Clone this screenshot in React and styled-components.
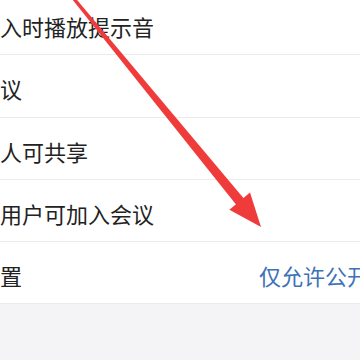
import styled, { createGlobalStyle } from 'styled-components'

const Global = createGlobalStyle`
    html, body {margin: 0; padding: 0;}
    body {
        background-color: #f4f4f6;
        font-family: "Noto Sans CJK SC", "Noto Sans", sans-serif;
    }
`

const Screen = styled.main`
    position: relative;
    width: 360px;
    height: 360px;
    overflow: hidden;
    background-color: #f4f4f6;
`

const List = styled.ul`
    list-style: none;
    margin: -7px 0 0 -66px;
    padding: 0;
    width: 500px;
    background-color: #fff;
`

const Row = styled.li`
    box-sizing: border-box;
    height: 62.25px;
    padding: 5px 21px 0 0;
    display: flex;
    align-items: center;
    justify-content: space-between;
    border-bottom: 1px solid #ebebeb;
    font-size: 22px;
    line-height: 1;
    white-space: nowrap;
`

const Label = styled.span`
    color: #222;
`

const Value = styled.span`
    color: #3d72b8;
`

const Arrow = styled.svg`
    position: absolute;
    left: 0;
    top: 0;
    pointer-events: none;
`

const settings = [
    {label: '成员加入时播放提示音'},
    {label: '锁定会议'},
    {label: '仅主持人可共享'},
    {label: '仅受邀用户可加入会议'},
    {label: '录制设置', value: '仅允许公开分享'},
]

export default function App() {
    return (
        <>
            <Global />
            <Screen>
                <List>
                    {settings.map(s => (
                        <Row key={s.label}>
                            <Label>{s.label}</Label>
                            {s.value && <Value>{s.value}</Value>}
                        </Row>
                    ))}
                </List>
                {/* red annotation arrow */}
                <Arrow width="360" height="360" viewBox="0 0 360 360">
                    <polygon
                        points="68.8,-5 71.2,-7 247.4,202.7 239.6,209.1"
                        fill="#f03b3b"
                    />
                    <polygon
                        points="261,227 250,192.6 229.4,209.8"
                        fill="#f03b3b"
                    />
                </Arrow>
            </Screen>
        </>
    )
}
